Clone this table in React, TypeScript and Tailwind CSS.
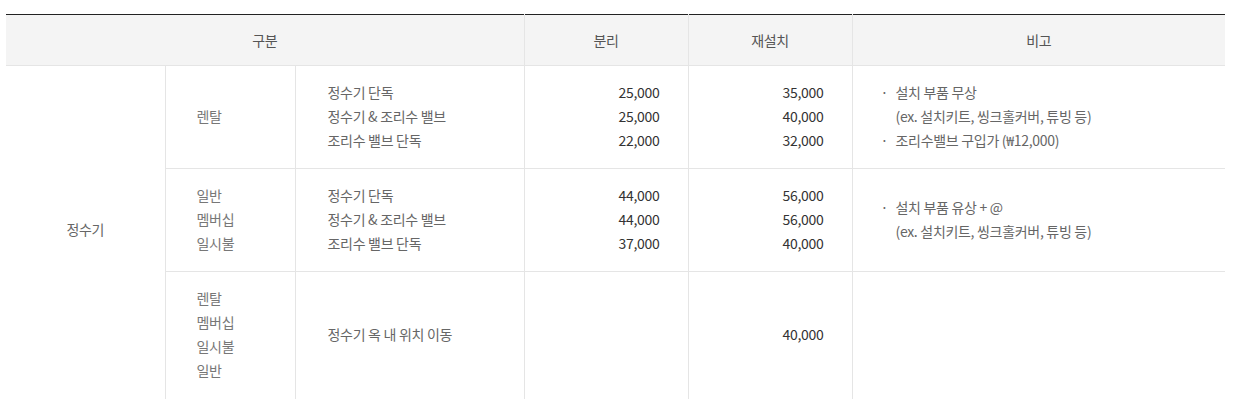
const rows = [
  {
    types: ["렌탈"],
    items: ["정수기 단독", "정수기 & 조리수 밸브", "조리수 밸브 단독"],
    remove: ["25,000", "25,000", "22,000"],
    reinstall: ["35,000", "40,000", "32,000"],
    notes: [
      { bullet: true, text: "설치 부품 무상" },
      { bullet: false, text: "(ex. 설치키트, 씽크홀커버, 튜빙 등)" },
      { bullet: true, text: "조리수밸브 구입가 (₩12,000)" },
    ],
  },
  {
    types: ["일반", "멤버십", "일시불"],
    items: ["정수기 단독", "정수기 & 조리수 밸브", "조리수 밸브 단독"],
    remove: ["44,000", "44,000", "37,000"],
    reinstall: ["56,000", "56,000", "40,000"],
    notes: [
      { bullet: true, text: "설치 부품 유상 + @" },
      { bullet: false, text: "(ex. 설치키트, 씽크홀커버, 튜빙 등)" },
    ],
  },
  {
    types: ["렌탈", "멤버십", "일시불", "일반"],
    items: ["정수기 옥 내 위치 이동"],
    remove: [],
    reinstall: ["40,000"],
    notes: [],
  },
];

const Lines = ({ lines }: { lines: string[] }) => (
  <>
    {lines.map((l, i) => (
      <div key={i}>{l}</div>
    ))}
  </>
);

export default function App() {
  return (
    <div
      className="w-[1246px] h-[399px] overflow-hidden bg-white pt-[14px] pl-[6px]"
      style={{ fontFamily: '"Noto Sans CJK KR", "Noto Sans", sans-serif' }}
    >
      <table className="w-[1219px] table-fixed border-collapse border-t border-[#222] text-[14px] leading-[24px] tracking-[-0.3px]">
        <colgroup>
          <col className="w-[159px]" />
          <col className="w-[130px]" />
          <col className="w-[229px]" />
          <col className="w-[164px]" />
          <col className="w-[164px]" />
          <col className="w-[373px]" />
        </colgroup>
        <thead>
          <tr className="h-[51px] bg-[#f4f4f4] text-[#555]">
            <th colSpan={3} className="font-normal text-center border-b border-[#e5e5e5]">
              구분
            </th>
            <th className="font-normal text-center border-l border-b border-[#e5e5e5]">분리</th>
            <th className="font-normal text-center border-l border-b border-[#e5e5e5]">재설치</th>
            <th className="font-normal text-center border-l border-b border-[#e5e5e5]">비고</th>
          </tr>
        </thead>
        <tbody>
          {rows.map((r, i) => (
            <tr key={i} className={i < 2 ? "border-b border-[#e5e5e5]" : "h-[140px] align-top"}>
              {i === 0 && (
                <td rowSpan={3} className="text-center align-middle text-[#666] pb-[20px]">
                  정수기
                </td>
              )}
              <td className={`border-l border-[#e5e5e5] pt-[14px] pl-[31px] text-[#777] ${i < 2 ? "pb-[16px] align-middle" : "pb-[30px] align-top"}`}>
                <Lines lines={r.types} />
              </td>
              <td className={`border-l border-[#e5e5e5] pt-[14px] pl-[32px] text-[#666] ${i < 2 ? "pb-[16px] align-middle" : "pt-[50px] align-top"}`}>
                <Lines lines={r.items} />
              </td>
              <td className={`border-l border-[#e5e5e5] pt-[14px] pr-[28px] text-right text-[#333] ${i < 2 ? "pb-[16px] align-middle" : "align-top"}`}>
                <Lines lines={r.remove} />
              </td>
              <td className={`border-l border-[#e5e5e5] pr-[28px] text-right text-[#333] ${i < 2 ? "pt-[14px] pb-[16px] align-middle" : "pt-[50px] align-top"}`}>
                <Lines lines={r.reinstall} />
              </td>
              <td className={`border-l border-[#e5e5e5] pt-[14px] pl-[28px] text-[#666] ${i < 2 ? "pb-[16px] align-middle" : "align-top"}`}>
                {r.notes.map((n, j) => (
                  <div key={j} className="flex">
                    <span className="w-[15px] shrink-0">{n.bullet ? "·" : ""}</span>
                    <span>{n.text}</span>
                  </div>
                ))}
              </td>
            </tr>
          ))}
        </tbody>
      </table>
    </div>
  );
}
